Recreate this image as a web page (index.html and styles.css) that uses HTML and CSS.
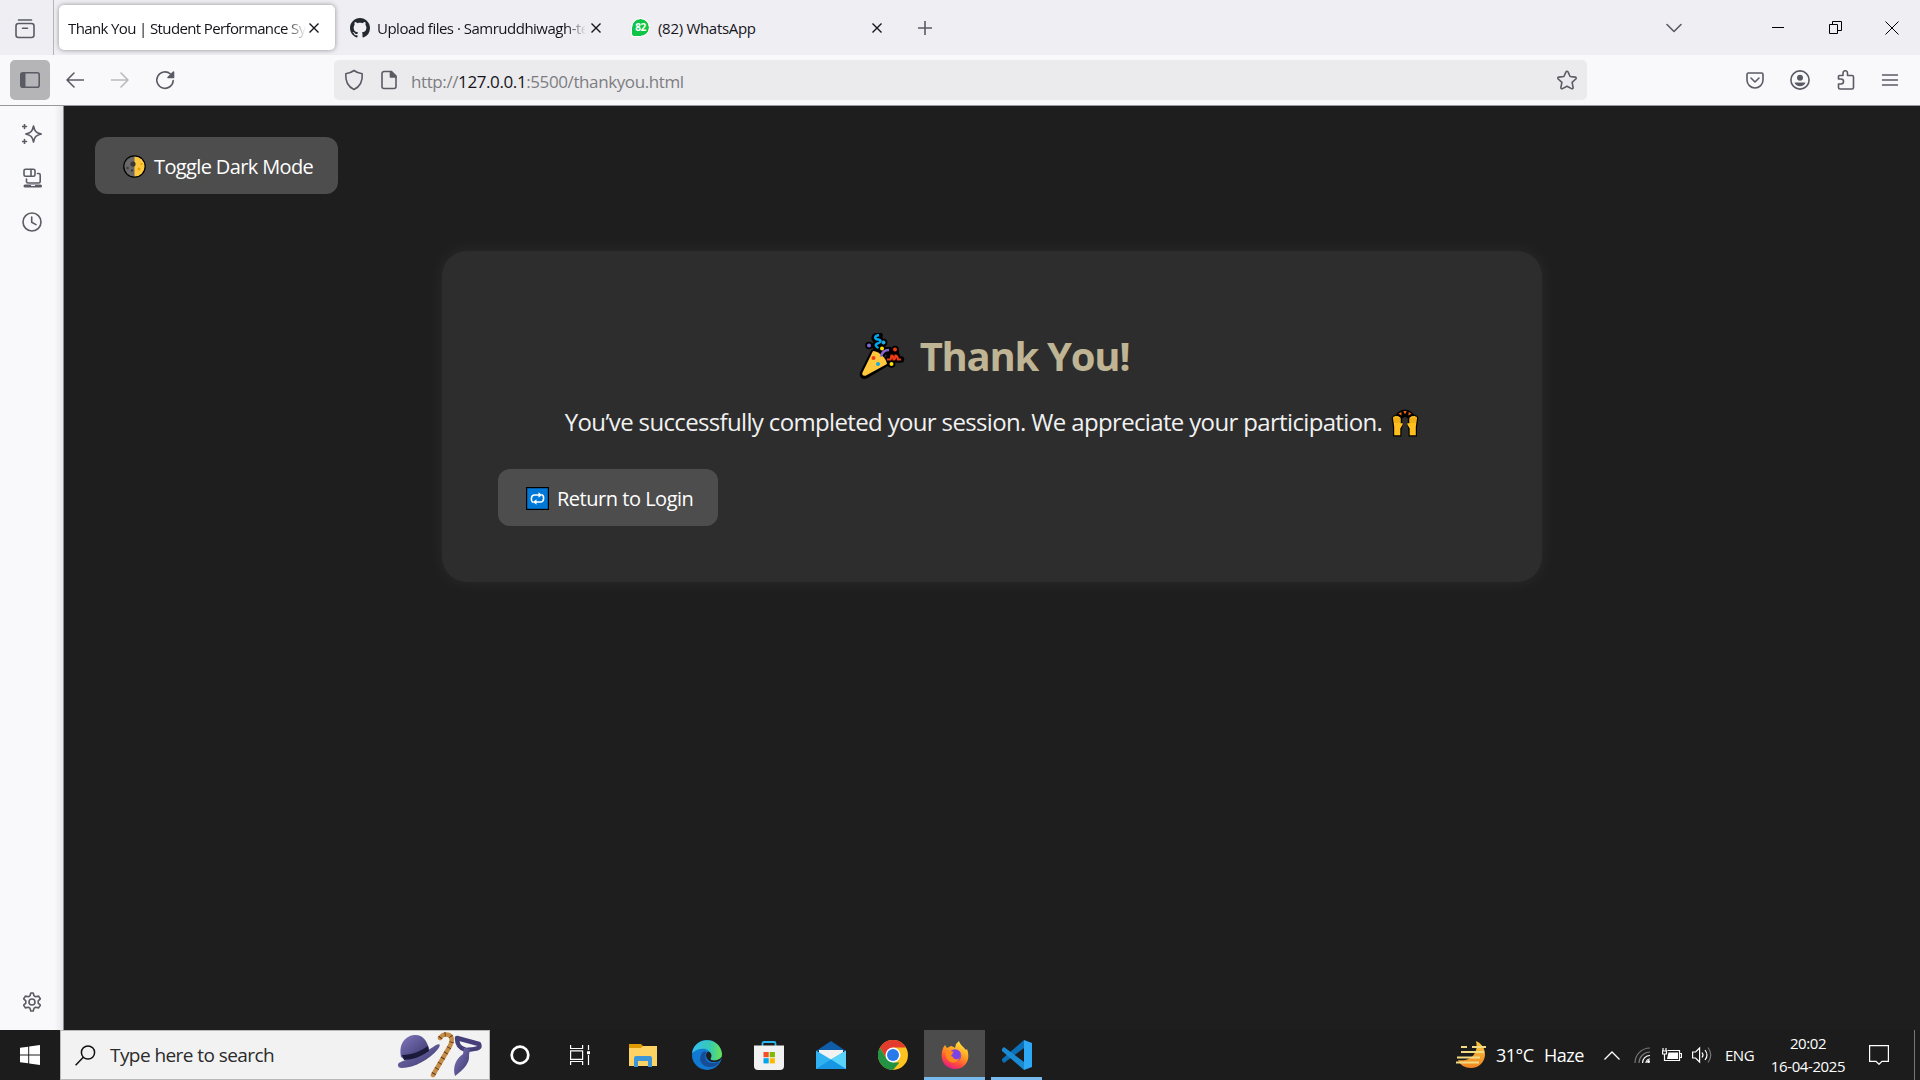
FILE: index.html
```html
<!DOCTYPE html>
<html lang="en">
<head>
<meta charset="utf-8">
<title>Thank You | Student Performance System</title>
<link rel="stylesheet" href="styles.css">
</head>
<body>
<div class="screen">
  <header class="tabstrip">
    <div class="recent"><svg class="ic" width="20" height="20" viewBox="0 0 20 20"><path d="M3.500 1h13"/><rect x="1" y="4.500" width="18" height="14" rx="2.500"/><path d="M7.500 9.300h5"/></svg></div>
    <div class="tab active"><span class="tab-label fade t1">Thank You | Student Performance Sy</span><svg class="close" width="10" height="10" viewBox="0 0 10 10"><path d="M.5.5l9 9M9.500.5l-9 9"/></svg></div>
    <div class="tab github">
      <svg width="20" height="20" viewBox="0 0 16 16"><path fill="#24292f" d="M8 0C3.580 0 0 3.580 0 8c0 3.540 2.290 6.530 5.470 7.590.4.070.55-.17.55-.38 0-.19-.01-.82-.01-1.490-2.010.37-2.530-.49-2.690-.94-.09-.23-.48-.94-.82-1.130-.28-.15-.68-.52-.01-.53.63-.01 1.080.58 1.230.82.72 1.210 1.870.87 2.330.66.070-.52.28-.87.51-1.070-1.780-.2-3.640-.89-3.640-3.950 0-.87.31-1.590.82-2.150-.08-.2-.36-1.020.08-2.120 0 0 .67-.21 2.200.82.64-.18 1.320-.27 2-.27s1.360.090 2 .27c1.530-1.040 2.200-.82 2.200-.82.44 1.100.16 1.920.080 2.120.51.56.82 1.270.82 2.150 0 3.070-1.870 3.750-3.650 3.950.29.25.54.73.54 1.480 0 1.070-.01 1.930-.01 2.200 0 .21.15.46.55.38A8.010 8.010 0 0016 8c0-4.420-3.580-8-8-8z"/></svg>
      <span class="tab-label fade t2">Upload files · Samruddhiwagh-te</span><svg class="close" width="10" height="10" viewBox="0 0 10 10"><path d="M.5.5l9 9M9.500.5l-9 9"/></svg></div>
    <div class="tab whatsapp">
      <span class="badge">82</span><span class="tab-label t3">(82) WhatsApp</span><svg class="close" width="10" height="10" viewBox="0 0 10 10"><path d="M.5.5l9 9M9.500.5l-9 9"/></svg></div>
    <svg class="ic plus" width="14" height="14" viewBox="0 0 14 14"><path d="M7 0v14M0 7h14"/></svg>
    <div class="window-controls">
      <svg class="ic" width="16" height="10" viewBox="0 0 16 10"><path d="M1 1.500l7 7 7-7"/></svg>
      <svg class="wc" width="12" height="12" viewBox="0 0 12 12"><path d="M0 5.500h12"/></svg>
      <svg class="wc" width="13" height="13" viewBox="0 0 13 13"><path d="M.5 3.500h8v9h-8zM3.500 3V.5h9v9H9"/></svg>
      <svg class="wc" width="14" height="14" viewBox="0 0 14 14"><path d="M.5.5l13 13M13.500.5l-13 13"/></svg>
    </div>
  </header>

  <nav class="toolbar">
    <div class="side-toggle"><svg width="20" height="16" viewBox="0 0 20 16"><rect x=".8" y=".8" width="18.400" height="14.400" rx="2" fill="none" stroke="#5b5b66" stroke-width="1.600"/><path fill="#5b5b66" d="M1 1h4.500v14H1z"/></svg></div>
    <svg class="ic back" width="18" height="16" viewBox="0 0 18 16"><path d="M17.500 8H1M8 1L1 8l7 7"/></svg>
    <svg class="ic fwd" width="18" height="16" viewBox="0 0 18 16"><path d="M.5 8H17M10 1l7 7-7 7"/></svg>
    <svg class="ic reload" width="20" height="20" viewBox="0 0 20 20"><path d="M18.200 10.500A8.200 8.200 0 1 1 15.500 4"/><path d="M18.500 2v5.500H13z" fill="#5b5b66"/></svg>
    <div class="urlbar">
      <svg class="ic" width="20" height="22" viewBox="0 0 20 22"><path d="M10 1.500c2.600 2 5.200 2.800 8.200 3.300C18.700 12 15.500 18 10 20.500 4.500 18 1.300 12 1.800 4.800 4.800 4.300 7.400 3.500 10 1.500z"/></svg>
      <svg class="ic doc" width="16" height="20" viewBox="0 0 16 20"><path d="M3 1.500h7.500L15 6v10.500a2 2 0 0 1-2 2H3a2 2 0 0 1-2-2v-13a2 2 0 0 1 2-2z"/><path d="M9.500 1.500V7H15z" fill="#5b5b66"/></svg>
      <span class="url">http://<b>127.0.0.1</b>:5500/thankyou.html</span>
      <svg class="ic star" width="20" height="20" viewBox="0 0 20 20"><path d="M10 1.200c.5 0 .8.300 1 .7l2.100 4.600 5 .6c1 .1 1.400 1.200.7 1.900l-3.700 3.400 1 5c.2 1-.8 1.700-1.600 1.200L10 16.200l-4.500 2.400c-.8.500-1.800-.2-1.600-1.200l1-5L1.200 9c-.7-.7-.3-1.800.7-1.900l5-.6L9 1.900c.2-.4.500-.7 1-.7z"/></svg>
    </div>
    <div class="tools">
      <svg class="ic" width="18" height="17" viewBox="0 0 18 17"><path d="M2.500 1h13A1.500 1.500 0 0 1 17 2.500V8A8 8 0 0 1 1 8V2.500A1.500 1.500 0 0 1 2.500 1zM5 6l4 4 4-4"/></svg>
      <svg class="ic" width="20" height="20" viewBox="0 0 20 20"><circle cx="10" cy="10" r="9.100"/><circle cx="10" cy="7.800" r="3" fill="#5b5b66" stroke="none"/><path d="M4.500 12.500h11c-.8 2.500-3 3.800-5.500 3.800s-4.700-1.300-5.500-3.800z" fill="#5b5b66" stroke="none"/></svg>
      <svg class="ic" width="18" height="20" viewBox="0 0 18 20"><path d="M1.500 8V6.500a1 1 0 0 1 1-1H6V3a2 2 0 0 1 4.500 0v2.500H15a1.500 1.500 0 0 1 1.500 1.500v10.500A1.500 1.500 0 0 1 15 19H3a1.500 1.500 0 0 1-1.500-1.500V14H4a2 2 0 0 0 0-5H1.500z"/></svg>
      <svg class="ic" width="16" height="14" viewBox="0 0 16 14"><path d="M.5 2h15M.5 7h15M.5 12h15"/></svg>
    </div>
  </nav>

  <div class="middle">
    <aside class="sidebar">
      <svg class="ic" width="20" height="20" viewBox="0 0 20 20"><path d="M11.500 2c1 5 2.500 6.800 7.700 8-5.200 1.200-6.700 3-7.700 8-1-5-2.500-6.800-7.700-8 5.200-1.200 6.700-3 7.700-8z"/><path d="M2.500.5v4M.5 2.500h4M2.500 15.500v4M.5 17.500h4"/></svg>
      <svg class="ic" width="20" height="20" viewBox="0 0 20 20"><rect x="2" y="1.300" width="11" height="7" rx="1.500"/><path d="M9 1.500V8M15.500 5.500h1.200a1.500 1.500 0 0 1 1.500 1.500v6.500a1.500 1.500 0 0 1-1.500 1.500H6A1.500 1.500 0 0 1 4.500 13.500V11"/><path d="M3 18h15.500" stroke-width="3"/><path d="M9.500 17.500h3" stroke="#f9f9fb" stroke-width="1.200"/></svg>
      <svg class="ic" width="20" height="20" viewBox="0 0 20 20"><circle cx="10" cy="10" r="9"/><path d="M9.700 5v5.300l4.300 2.300"/></svg>
      <svg class="ic gear" width="20" height="20" viewBox="0 0 20 20"><circle cx="10" cy="10" r="3"/><path d="M8.800 1h2.400l.9 2.900 1.500.9 3-.7 1.700 2.700-2.100 2v2.400l2.100 2-1.700 2.700-3-.7-1.500.9-.9 2.900H8.800l-.9-2.900-1.500-.9-3 .7-1.700-2.700 2.100-2V8.800l-2.100-2 1.700-2.700 3 .7 1.500-.9z"/></svg>
    </aside>

    <main class="page">
      <button class="btn toggle">
        <svg width="23" height="23" viewBox="0 0 23 23"><circle cx="11.500" cy="11.500" r="10.500" fill="#696969"/><path d="M11.500 1a10.500 10.500 0 0 1 0 21z" fill="#ffc83d"/><circle cx="10" cy="9" r="2.600" fill="#3b3735"/><circle cx="4.500" cy="13" r="1.500" fill="#454545"/><circle cx="9" cy="15.500" r="1.200" fill="#3d3d3d"/><circle cx="16" cy="14" r="1.500" fill="#e89f00"/><circle cx="18.500" cy="9" r="1" fill="#e89f00"/><circle cx="11.500" cy="11.500" r="10.700" fill="none" stroke="#000" stroke-width="1.200"/></svg>
        <span class="toggle-text">Toggle Dark Mode</span>
      </button>
      <section class="card">
        <h1>
          <svg width="46" height="46" viewBox="0 0 46 46"><g fill="none" stroke="#000" stroke-linejoin="round" stroke-linecap="round"><path d="M14 19L3.500 40c-1 3 1 4 3.500 3l20-12z" stroke-width="5"/><path d="M20 2.500c-5 1-5 4-1 4.500s3 3-.5 4-1 3.500 1 4.500M10 12.500h.1M24.500 9.500h.1M23 15.500h.1M36 16.500h.1M32.500 31h.1" stroke-width="7.500"/><path d="M22 23.500c1-4.500 4-6.500 8-6.500M28 26.500h3q1 0 1.500-4 2 0 2 4 2 0 2-4 2 0 2.500 4h3M30 20h7" stroke-width="6.500"/></g><path d="M14 18L3.500 39.500c-1 2.500 1 4 3.500 3L28 31c-1-6-7-12-14-13z" fill="#ffc83d"/><path d="M20 2c-5 1-5 4-1 4.500s3 3-.5 4-1 3.500 1 4.500" fill="none" stroke="#00a6ed" stroke-width="2.400"/><path d="M22 23.500c1-4.500 4-6.500 8-6.500" fill="none" stroke="#8467d7" stroke-width="2.400"/><path d="M28 26.500h3q1 0 1.500-4 2 0 2 4 2 0 2-4 2 0 2.500 4h3" fill="none" stroke="#f03a17" stroke-width="2.200"/><g fill="#f03a17"><circle cx="14.500" cy="25" r="2"/><circle cx="36" cy="16.500" r="2"/></g><g fill="#1ba8e0"><circle cx="19" cy="31" r="2"/><circle cx="24.500" cy="9.500" r="2"/></g><g fill="#ffe100"><circle cx="23" cy="15.500" r="2"/><circle cx="32.500" cy="31" r="2"/></g><circle cx="10" cy="12.500" r="2" fill="#8467d7"/></svg>
          <span class="h-text">Thank You!</span>
        </h1>
        <p><span class="p-text">You’ve successfully completed your session. We appreciate your participation.</span>
          <svg width="28" height="28" viewBox="0.500 0 27 28"><path d="M2 27.500V18L.7 9q1-3 4.300-3.500Q8 1 14 .5q6 .5 9 5Q26.500 6 27.300 9L26 18v9.500h-8.500V21l-1-4L17 10q-1-2-3-2t-3 2l.5 7-1 4v6.500z"/><path d="M2 9q0-2 1.600-1.500Q4.800 6 5.800 7.300 7.500 6.300 8 8q1.700-.3 1.700 2v4.500l1.300-.5q1.500.5.300 2L9.300 19.500v6.700H3.200V18z" fill="#ffbf1f"/><path d="M26 9q0-2-1.600-1.500Q23.200 6 22.200 7.300 20.500 6.300 20 8q-1.700-.3-1.700 2v4.500l-1.300-.5q-1.500.5-.3 2l2 3.500v6.700h6.100V18z" fill="#ffbf1f"/><path d="M4 8.500V14M6 8.500V14M8 9v5M20 9v5M22 8.500V14M24 8.500V14" stroke="#d48c00" stroke-width=".6"/><path d="M12.300 2h3.400L14 5.500zM7.500 4.800l2.700-1.800.5 3.500zM20.500 4.800L17.800 3l-.5 3.500z" fill="#f7630c"/></svg>
        </p>
        <button class="btn return">
          <svg width="23" height="23" viewBox="0 0 23 23"><path d="M0 0h23v23H0z"/><path d="M1.200 1.200h20.600v20.600H1.200z" fill="#0078d7"/><path d="M7.500 15.500C4.500 14.500 4.500 8 8.500 8H13M15.500 7.500c3 1 3 7.500-1 7.500H10" fill="none" stroke="#fff" stroke-width="1.500"/><path d="M12.500 5.300L16 8l-3.500 2.700zM10.500 12.300L7 15l3.500 2.700z" fill="#fff"/></svg>
          <span class="return-text">Return to Login</span>
        </button>
      </section>
    </main>
  </div>

  <footer class="taskbar">
    <div class="start"><svg width="20" height="20" viewBox="0 0 20 20"><path fill="#fff" d="M0 2.800l8.200-1.100v7.800H0zM9.200 1.500L20 0v9.500H9.200zM0 10.500h8.200v7.800L0 17.200zM9.200 10.500H20V20L9.200 18.500z"/></svg></div>
    <div class="search">
      <svg width="21" height="21" viewBox="0 0 21 21" fill="none" stroke="#111" stroke-width="1.500"><circle cx="13" cy="7.500" r="6.600"/><path d="M8.300 12.300L.6 20.300"/></svg>
      <span class="search-text">Type here to search</span>
      <svg class="doodle" width="86" height="46" viewBox="0 0 86 46">
        <defs><linearGradient id="hat" x1="0" y1="0" x2="1" y2="1"><stop offset="0" stop-color="#8178bd"/><stop offset="1" stop-color="#38346a"/></linearGradient></defs>
        <path d="M1 33c0-5 16-5 38-20 4-2 5 0 2 4C33 27 17 36 5 36c-3 0-4-1-4-3z" fill="url(#hat)"/><path d="M4 25C1 10 10 4 17 3c8-1 13 5 15 14-7 5-15 9-25 10z" fill="url(#hat)"/><path d="M5 23c10 0 19-4 26-9l1 5c-7 5-16 9-25 9z" fill="#1c1a3b"/>
        <path d="M43 6q3-5 9-3 5 3 1 11L36 43" fill="none" stroke="#c68d49" stroke-width="4.500" stroke-linecap="round"/><path d="M43 6q3-5 9-3 5 3 1 11L36 43" fill="none" stroke="#5e3a18" stroke-width="4.500" stroke-dasharray="1 5"/>
        <path d="M60 6l22 6c2 5-3 5-13 6-8-2-9-7-9-12z" fill="none" stroke="#45407a" stroke-width="4.500" stroke-linejoin="round"/><path d="M67 16l6 1-1 6c1 8-5 14-14 21-3-10 2-18 8-22z" fill="url(#hat)"/>
      </svg>
    </div>
    <div class="apps">
      <div class="app"><svg width="20" height="20" viewBox="0 0 20 20"><circle cx="10" cy="10" r="8.300" fill="none" stroke="#fff" stroke-width="2.700"/></svg></div>
      <div class="app"><svg width="20" height="20" viewBox="0 0 20 20" fill="none" stroke="#fff" stroke-width="1.200"><path d="M.6 0v3.500h12V0M.6 5.800h12v8.500H.6zM.6 20v-3.500h12V20M18.500 0v5M18.500 10v10"/><path d="M17 6.200h3v3h-3z" fill="#fff" stroke="none"/></svg></div>
      <div class="app"><svg width="28" height="24" viewBox="0 0 28 24"><path fill="#e09a00" d="M0 1h12l2 2v6H0z"/><path fill="#ffd264" d="M0 5h12l2-2h14v20H0z"/><path fill="#3c96d8" d="M5 24V15q0-2 2-2h14q2 0 2 2v9h-4v-6H9v6z"/></svg></div>
      <div class="app"><svg width="30" height="30" viewBox="0 0 30 30"><defs><linearGradient id="eg"><stop offset="0" stop-color="#35bdf0"/><stop offset=".6" stop-color="#36c9b4"/><stop offset="1" stop-color="#6be34d"/></linearGradient></defs><circle cx="15" cy="15" r="15" fill="#1279d2"/><path d="M0 13C3-4 28-4 30 14c0 6-6 8-11 6-2-1-1-2 0-4 0-8-11-10-19-3z" fill="url(#eg)"/><path d="M10 13c-5 8 1 15 10 14 3 0 6-3 8-6-10 5-17 0-14-8 1-2-3-2-4 0z" fill="#174d96"/><path d="M15.500 12c-3 3-1 8 3 9.500 3 1.200 7 .5 9.500-1l2.500-3.500-1 0c-2 3-7 4-10 3-2-1 0-2 0-4.500 0-2-2-4.500-4-3.500z" fill="#1e1e1e"/></svg></div>
      <div class="app"><svg width="30" height="30" viewBox="0 0 30 30"><path d="M8.500 7V3.500q0-1.500 1.500-1.500h10q1.500 0 1.500 1.500V7" fill="none" stroke="#2bb5ed" stroke-width="1.800"/><path d="M0 5.500h30V26q0 4-4 4H4q-4 0-4-4z" fill="#f1f1f1"/><path d="M9.500 12h5.200v5.200H9.500z" fill="#f25022"/><path d="M15.700 12h5.200v5.200h-5.200z" fill="#7fba00"/><path d="M9.500 18.200h5.200v5.200H9.500z" fill="#00a4ef"/><path d="M15.700 18.200h5.200v5.200h-5.200z" fill="#ffb900"/></svg></div>
      <div class="app"><svg width="30" height="28" viewBox="0 0 30 28"><path d="M0 10L15 0l15 10z" fill="#0f5ca8"/><path d="M3 9h24v10H3z" fill="#f2f2f2"/><path d="M0 9.500L15 18.500l15-9V28H0z" fill="#30b2f2"/><path d="M15 18.500L30 28V9.500z" fill="#59d3fa"/><path d="M0 28l15-9.500L30 28z" fill="#1696e3"/></svg></div>
      <div class="app"><svg width="30" height="30" viewBox="0 0 30 30"><circle cx="15" cy="15" r="15" fill="#ffc31f"/><path d="M2 7.500A15 15 0 0 1 28 7.500H15l-6.500 11z" fill="#e33b2e"/><path d="M2 7.500L8.500 18.700 15 22.500h6.500L15 30A15 15 0 0 1 2 7.500z" fill="#229342"/><circle cx="15" cy="15" r="7.500" fill="#fff"/><circle cx="15" cy="15" r="6" fill="#2a7bea"/></svg></div>
      <div class="app firefox"><svg width="28" height="28" viewBox="0 0 28 28"><defs><linearGradient id="ff" x1=".8" y1="0" x2=".3" y2="1"><stop offset="0" stop-color="#fff044"/><stop offset=".45" stop-color="#ff9a20"/><stop offset=".75" stop-color="#ff4b3e"/><stop offset="1" stop-color="#e2198d"/></linearGradient></defs><path d="M2 7l2-3 2 3 4-2c1 0 3 1 4 2l1-4 3-3c1 4 4 5 7 9l1-1c4 10-1 20-12 20C3 28-2 18 2 7z" fill="url(#ff)"/><circle cx="14" cy="14.500" r="6.200" fill="#8440df"/><path d="M5 9l9 2c0 2-3 2-4 4 3 2 7 0 10-3-1 8-6 12-12 8-3-2-4-7-3-11z" fill="#ff8a1c"/><circle cx="15.500" cy="14" r="4.200" fill="#7a43e6"/></svg></div>
      <div class="app code"><svg width="30" height="30" viewBox="0 0 30 30"><path d="M2 23l-2-2v-2L22 0v8z" fill="#0b70b8"/><path d="M2 7L0 9v2l22 19v-8z" fill="#1a8ad2"/><path d="M22 0l8 3v24l-8 3z" fill="#2da8f4"/></svg></div>
    </div>
    <div class="tray">
      <svg class="weather" width="31" height="28" viewBox="0 0 31 28"><defs><linearGradient id="moon" x1="0" y1="0" x2="0" y2="1"><stop offset="0" stop-color="#f6c940"/><stop offset="1" stop-color="#f08522"/></linearGradient></defs><path d="M20 0c5 2 9 7 9 13 0 8-6 14-14 14-6 0-11-3-13-8 13 2 21-7 18-19z" fill="url(#moon)"/><path d="M5 6h6M16 6h14M5 11h23M1 16.500h23M0 21.500h23" stroke="#f3db83" stroke-width="2.200"/></svg>
      <span class="temp">31°C</span><span class="haze">Haze</span>
      <svg class="chev" width="16" height="9" viewBox="0 0 16 9"><path d="M.5 8.500L8 1l7.500 7.500" fill="none" stroke="#fff" stroke-width="1.300"/></svg>
      <svg class="wifi" width="17" height="17" viewBox="0 0 17 17" fill="none" stroke-width="1.200"><path stroke="#777" d="M1 16A15 15 0 0 1 16 1M5 16A11 11 0 0 1 16 5"/><path stroke="#fff" d="M8.500 16A7.500 7.500 0 0 1 16 8.500M12 16a4 4 0 0 1 4-4"/><circle cx="14.500" cy="14.500" r="1.500" fill="#fff"/></svg>
      <svg class="batt" width="20" height="14" viewBox="0 0 20 14"><path d="M5.500 2.500h12v10h-12M17.500 5.500h2v4h-2M1 0v3M4 0v3M.5 3h4v3h-4zM2.500 6v6.500h3" fill="none" stroke="#fff" stroke-width="1.200"/><path d="M6.500 4.500h9.500v6.500H5z" fill="#fff"/></svg>
      <svg class="vol" width="20" height="18" viewBox="0 0 20 18" fill="none" stroke="#fff" stroke-width="1.200"><path d="M.6 6h3l4-4v14l-4-4h-3zM10 6.500q2 2.500 0 5M13 4q4 5 0 10"/><path stroke="#777" d="M16 1.500q5.500 7.500 0 15"/></svg>
      <span class="eng">ENG</span>
      <div class="clock"><span class="time">20:02</span><span class="date">16-04-2025</span></div>
      <svg class="action" width="20" height="20" viewBox="0 0 20 20"><path d="M.6.6h18.800v15.800h-6.400L10 19.300l-3-2.900H.6z" fill="none" stroke="#fff" stroke-width="1.200"/></svg>
      <span class="peek"></span>
    </div>
  </footer>
</div>
</body>
</html>
```
FILE: styles.css
```css
* { box-sizing: border-box; }
body { margin: 0; font-family: "Open Sans", "Noto Sans", sans-serif; }
svg { display: block; flex: none; }
span { white-space: nowrap; }
.screen { width: 1920px; height: 1080px; display: flex; flex-direction: column; overflow: hidden; background: #1e1e1e; }
.ic { fill: none; stroke: #5b5b66; stroke-width: 1.6; stroke-linecap: round; stroke-linejoin: round; }

/* Tab strip */
.tabstrip { height: 55px; background: #efeef3; display: flex; align-items: center; color: #15141a; font-size: 15px; }
.recent { width: 54px; height: 55px; padding: 19px 0 0 15px; border-right: 1px solid #b5b4ba; flex: none; }
.tab { display: flex; align-items: center; height: 45px; flex: none; }
.tab.active { width: 276px; margin-left: 5px; padding-left: 9px; background: #fff; border-radius: 5px; box-shadow: 0 0 5px rgba(0, 0, 0, .4); }
.github { margin-left: 15px; width: 252px; }
.whatsapp { margin-left: 30px; width: 252px; }
.close { fill: none; stroke: #15141a; stroke-width: 1.4; }
.tab-label { line-height: 24px; }
.fade { -webkit-mask-image: linear-gradient(to left, transparent, #000 20px); mask-image: linear-gradient(to left, transparent, #000 20px); }
.t1 { width: 238px; margin-right: 3px; letter-spacing: -.62px; }
.t2 { width: 209px; margin: 0 5px 0 7px; letter-spacing: -.5px; }
.t3 { width: 214px; margin-left: 9px; letter-spacing: -.3px; }
.badge { width: 17px; height: 17px; border-radius: 9px 9px 9px 2px; background: #10c545; color: #fff; font-size: 10px; font-weight: 700; line-height: 17px; text-align: center; letter-spacing: -.5px; outline: 1px solid #fff; }
.plus { margin-left: 34px; }
.window-controls { margin-left: auto; margin-right: 21px; display: flex; align-items: center; }
.window-controls .wc:nth-child(2) { margin-left: 90px; }
.window-controls .wc:nth-child(3) { margin-left: 45px; }
.window-controls .wc:nth-child(4) { margin-left: 43px; }
.wc { fill: none; stroke: #000; stroke-width: 1; }

/* Navigation toolbar */
.toolbar { height: 51px; background: #f9f9fb; border-bottom: 1px solid #98989c; display: flex; align-items: center; }
.side-toggle { width: 40px; height: 40px; margin-left: 10px; border-radius: 5px; background: #b5b5b7; display: grid; place-items: center; }
.back { margin-left: 16px; }
.fwd { margin-left: 27px; opacity: .4; }
.reload { margin-left: 26px; }
.urlbar { width: 1253px; height: 40px; margin-left: 159px; padding: 0 10px; border-radius: 5px; background: #ebebed; display: flex; align-items: center; }
.doc { margin-left: 17px; }
.url { margin-left: 14px; font-size: 17px; letter-spacing: -.4px; color: #7d7d82; padding-top: 3px; }
.url b { font-weight: 400; color: #15141a; }
.star { margin-left: auto; }
.tools { flex: 1; display: flex; align-items: center; padding-left: 159px; }
.tools .ic:nth-child(2) { margin-left: 26px; }
.tools .ic:nth-child(3) { margin-left: 27px; }
.tools .ic:nth-child(4) { margin-left: 27px; }

/* Sidebar and page */
.middle { height: 924px; display: flex; }
.sidebar { width: 64px; background: linear-gradient(to right, #f9f9fb 54px, #e8e8ec 63px); border-right: 1px solid #8c8c90; padding: 18px 0 18px 22px; display: flex; flex-direction: column; gap: 24px; }
.gear { margin-top: auto; }
.page { flex: 1; background: #1e1e1e; padding: 31px; color: #f1f1f1; }
.btn { font: inherit; border: 0; border-radius: 12px; background: #4d4d4d; color: #fff; display: flex; align-items: center; height: 57px; font-size: 20px; }
.btn span { padding-top: 2px; }
.btn svg { margin-top: 2px; }
.toggle { width: 243px; padding: 0 0 0 28px; gap: 8px; }
.toggle-text { letter-spacing: -.63px; }
.card { width: 1100px; height: 331px; margin: 57px auto 0; padding: 73px 56px 0; border-radius: 25px; background: #2d2d2d; box-shadow: 0 0 18px rgba(255, 255, 255, .06); }
h1 { margin: 0 0 0 4px; height: 64px; display: flex; justify-content: center; align-items: center; gap: 15px; color: #bfb493; font-size: 40px; font-weight: 700; line-height: 64px; }
h1 span { margin-top: -1px; }
.h-text { letter-spacing: -1.3px; }
p { margin: 17px 0 0; height: 36px; display: flex; justify-content: center; align-items: center; gap: 9px; font-size: 24px; line-height: 36px; }
.p-text { letter-spacing: -.65px; margin-top: -2px; }
p svg { margin-top: -1px; }
.return { margin-top: 28px; width: 220px; padding: 0 0 0 28px; gap: 8px; }
.return-text { letter-spacing: -.48px; }

/* Taskbar */
.taskbar { height: 50px; background: #1c1c1c; display: flex; color: #fff; }
.start { width: 60px; display: grid; place-items: center; }
.search { width: 430px; background: #f2f2f2; border: 1px solid #b9b9b9; display: flex; align-items: center; padding-left: 14px; color: #2b2b2b; }
.search-text { margin-left: 14px; font-size: 19px; letter-spacing: -.56px; }
.doodle { margin-left: auto; margin-right: 6px; }
.apps { display: flex; height: 50px; }
.app { width: 62px; display: grid; place-items: center; }
.app:first-child { width: 60px; }
.app:nth-child(2) { width: 60px; }
.app:nth-child(3) { width: 66px; }
.app.firefox { width: 61px; background: #4c4c4c; border-bottom: 3px solid #76b9ed; padding-top: 2px; }
.app.code { width: 51px; margin-left: 6px; border-bottom: 3px solid #76b9ed; padding-top: 2px; }
.tray { margin-left: auto; display: flex; align-items: center; }
.temp { margin-left: 9px; width: 38px; font-size: 18px; letter-spacing: -.5px; }
.haze { margin-left: 10px; width: 41px; font-size: 18px; letter-spacing: -.5px; }
.chev { margin-left: 19px; }
.wifi { margin-left: 14px; }
.batt { margin-left: 11px; }
.vol { margin-left: 10px; }
.eng { margin-left: 13px; width: 30px; font-size: 15px; letter-spacing: -.5px; }
.clock { margin-left: 13px; width: 80px; display: flex; flex-direction: column; align-items: center; font-size: 15px; line-height: 23px; letter-spacing: -.4px; }
.action { margin-left: 21px; }
.peek { margin-left: 25px; width: 1px; height: 50px; margin-right: 5px; background: #777; }
```
